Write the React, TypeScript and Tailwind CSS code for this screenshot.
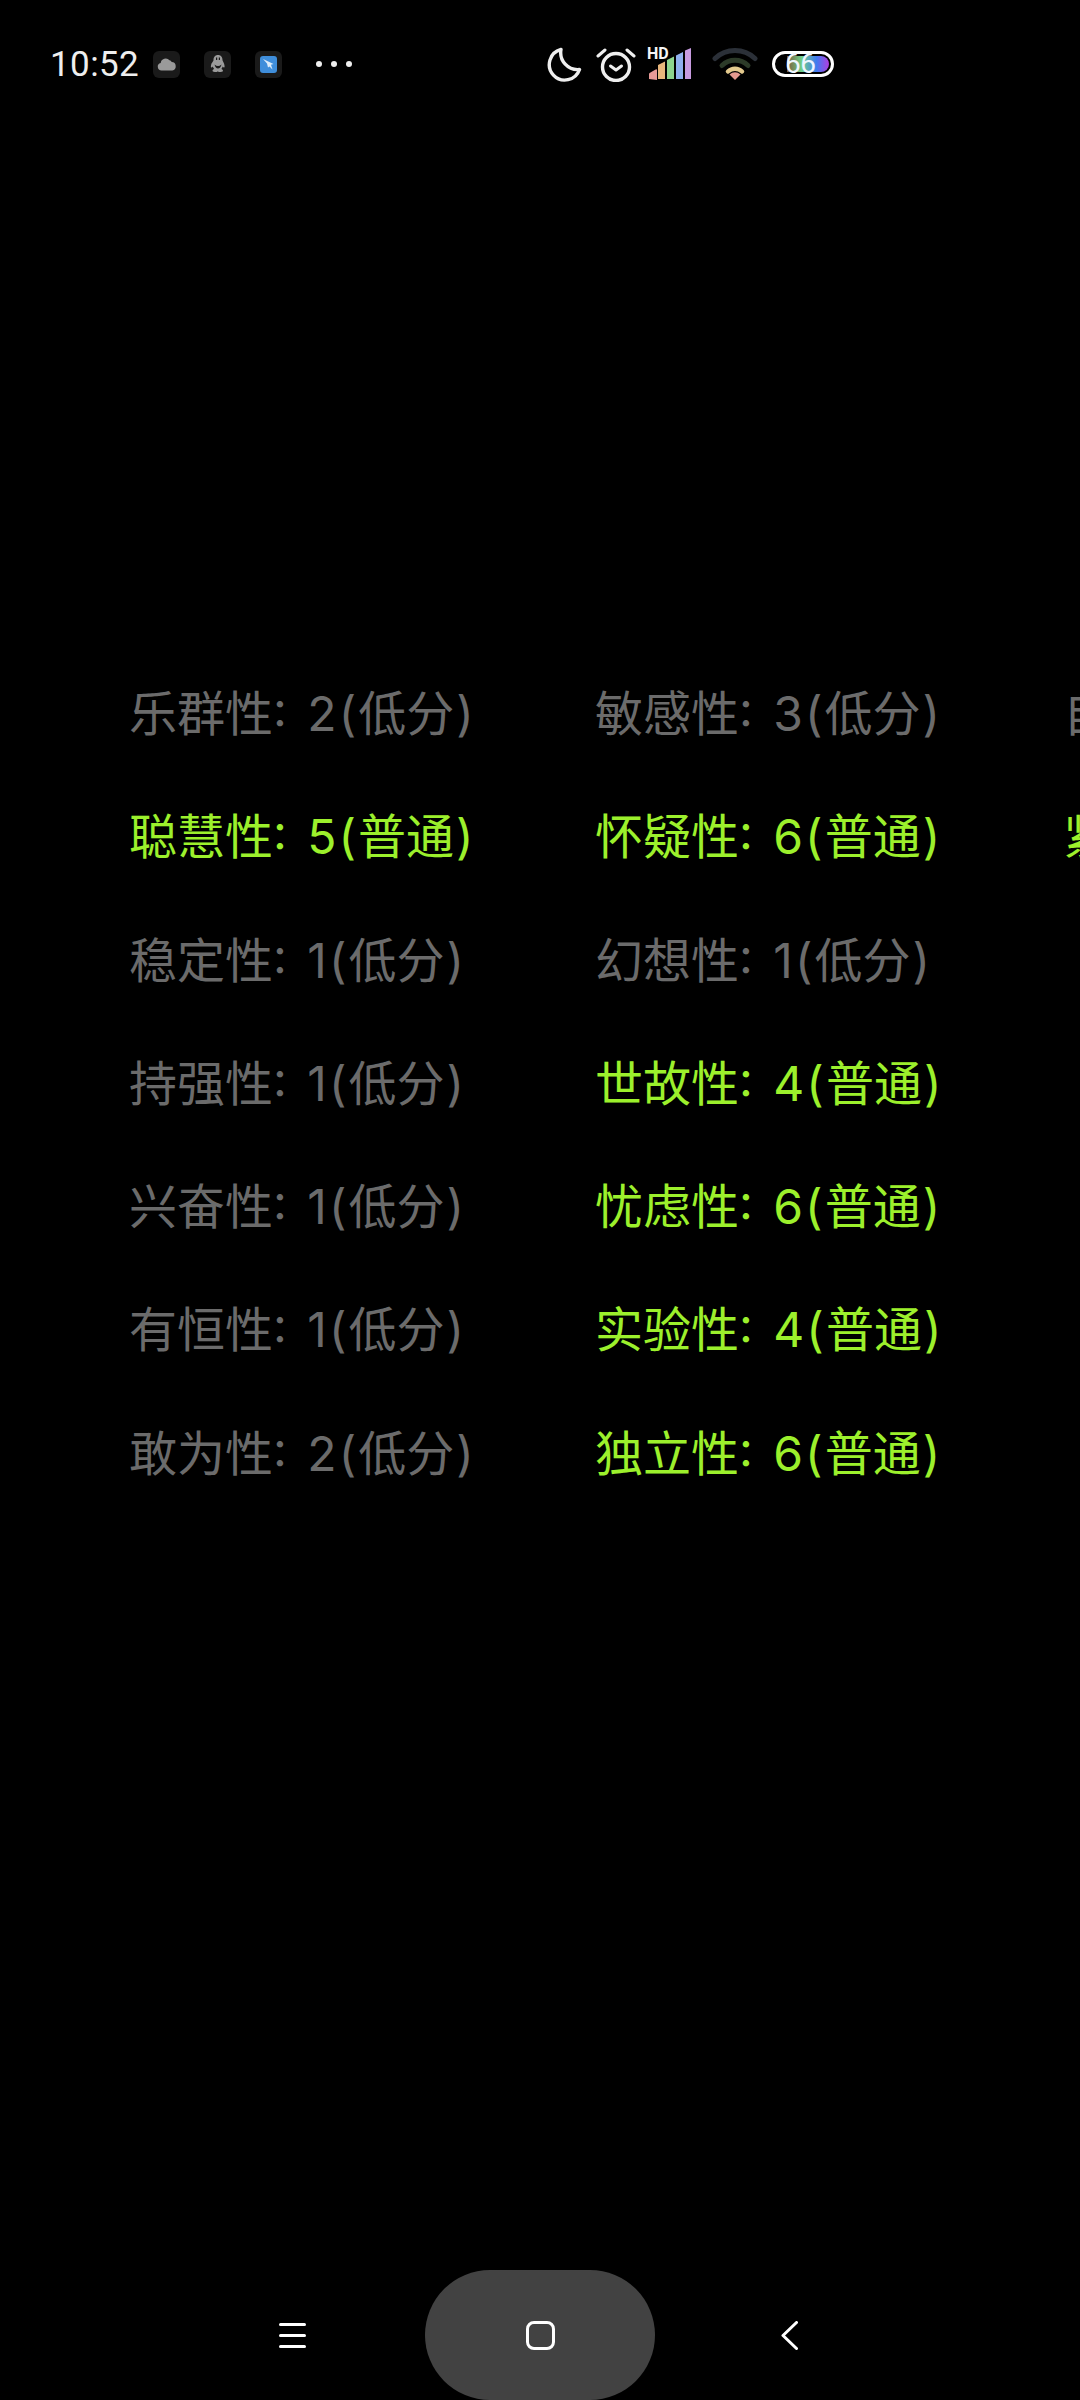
import React from "react";

type Item = { label: string; score: number; level: string };

const col1: Item[] = [
  { label: "乐群性", score: 2, level: "低分" },
  { label: "聪慧性", score: 5, level: "普通" },
  { label: "稳定性", score: 1, level: "低分" },
  { label: "持强性", score: 1, level: "低分" },
  { label: "兴奋性", score: 1, level: "低分" },
  { label: "有恒性", score: 1, level: "低分" },
  { label: "敢为性", score: 2, level: "低分" },
];

const col2: Item[] = [
  { label: "敏感性", score: 3, level: "低分" },
  { label: "怀疑性", score: 6, level: "普通" },
  { label: "幻想性", score: 1, level: "低分" },
  { label: "世故性", score: 4, level: "普通" },
  { label: "忧虑性", score: 6, level: "普通" },
  { label: "实验性", score: 4, level: "普通" },
  { label: "独立性", score: 6, level: "普通" },
];

const col3: Item[] = [
  { label: "自律性", score: 3, level: "低分" },
  { label: "紧张性", score: 5, level: "普通" },
];

const Row = ({ item }: { item: Item }) => (
  <p className={`h-[123.3px] leading-[123.3px] whitespace-nowrap text-[48px] [word-spacing:7px] font-['Inter','Noto_Sans_CJK_SC',sans-serif] ${item.level === "普通" ? "text-[#9cf02c]" : "text-[#6b6b6b]"}`}>
    {item.label}: {item.score}<span className="mx-[2px]">(</span>{item.level}<span className="ml-[2px]">)</span>
  </p>
);

const Column = ({ items, width }: { items: Item[]; width: string }) => (
  <div className={`flex flex-col shrink-0 ${width}`}>
    {items.map((it) => <Row key={it.label} item={it} />)}
  </div>
);

const IconBox = ({ children }: { children: React.ReactNode }) => (
  <div className="w-[27px] h-[27px] rounded-md bg-[#1a1a1a] flex items-center justify-center">{children}</div>
);

const StatusBar = () => (
  <div className="flex items-center h-[50px] mt-[39px] pl-[50px]">
    <span className="text-[35px] leading-none tracking-[0.4px] text-[#eeeeee] w-[103px] font-['Roboto',sans-serif]">10:52</span>
    <div className="flex gap-[24px]">
      <IconBox>
        <svg width="20" height="14" viewBox="0 0 20 14"><path d="M4.500 13.500a3.800 3.800 0 0 1-.8-7.500A5 5 0 0 1 12.500 3.300a3.200 3.200 0 0 1 2.200 1.700 4.300 4.300 0 0 1 .6 8.500z" fill="#9a9a9a" /></svg>
      </IconBox>
      <IconBox>
        <svg width="18" height="20" viewBox="0 0 18 20" fill="#9a9a9a">
          <path d="M9 1c3 0 4.500 2.300 4.500 5 0 1 1 1.800 1.500 3.500.5 1.700 1 3.500.2 4-.5.200-1-.3-1.500-1-.2 1-.7 1.800-1.400 2.400 1 .4 1.700 1 1.700 1.800 0 1-2 1.300-3.500 1.300-1 0-1.500-.3-1.500-.8-.5.500-1 .8-2 .8-1.500 0-3.500-.3-3.500-1.300 0-.8.700-1.400 1.700-1.800-.7-.6-1.200-1.400-1.400-2.400-.5.700-1 1.200-1.500 1-.8-.5-.3-2.300.2-4C3.500 7.800 4.500 7 4.500 6 4.500 3.300 6 1 9 1z" />
          <path d="M5.500 10.500q3.500 3 7 0-1 4-3.500 4t-3.500-4z" fill="#1a1a1a" />
          <rect x="7" y="3.500" width="1.200" height="2.500" fill="#1a1a1a" />
          <rect x="9.800" y="3.500" width="1.200" height="2.500" fill="#1a1a1a" />
        </svg>
      </IconBox>
      <IconBox>
        <div className="w-[17px] h-[17px] rounded-[3px] bg-[#3f8edb] flex items-center justify-center">
          <svg width="13" height="13" viewBox="0 0 13 13"><path d="M1 1l10.500 5-2.500.8 1.500 4.700-3-3-1.500 1-1-4z" fill="#dcecfa" /></svg>
        </div>
      </IconBox>
    </div>
    <div className="flex gap-[9px] ml-[34px]">
      <span className="w-[6px] h-[6px] rounded-full bg-[#eeeeee]" />
      <span className="w-[6px] h-[6px] rounded-full bg-[#eeeeee]" />
      <span className="w-[6px] h-[6px] rounded-full bg-[#eeeeee]" />
    </div>

    <div className="flex items-center ml-[194px]">
      <svg width="36" height="35" viewBox="0 0 36 35" fill="none">
        <path d="M15 2.500A15.500 15.500 0 1 0 33.500 22.500 A17 17 0 0 1 15 2.500z" stroke="#eeeeee" strokeWidth="3.400" strokeLinejoin="round" />
      </svg>
      <svg className="ml-[14px]" width="40" height="36" viewBox="0 0 40 36" fill="none" stroke="#eeeeee" strokeLinecap="round">
        <circle cx="20" cy="21" r="13.500" strokeWidth="3.400" />
        <path d="M14.500 20l5.500 4 5.500-4" strokeWidth="3" strokeLinejoin="round" />
        <path d="M2 10l7-6M38 10l-7-6" strokeWidth="3" />
      </svg>
      <div className="relative ml-[12px] w-[44px] h-[32px]">
        <svg width="44" height="32" viewBox="0 0 44 32">
          <path d="M1 31v-5q0-.6.600-1l6-3.500q1.400-.6 1.400.6v9.900z" fill="#e79a97" />
          <path d="M10 31V17l7-3.500V31z" fill="#e8b77c" />
          <path d="M19 31V12l7-3.500V31z" fill="#8dd58e" />
          <path d="M28 31V7.500l7-3.500V31z" fill="#8fb0ee" />
          <path d="M37 31V2.500l6-2.500V31z" fill="#c79be0" />
        </svg>
        <span className="absolute left-[-1px] top-[-3px] text-[16px] leading-[18px] font-bold text-[#f5f5f5] font-['Roboto',sans-serif]">HD</span>
      </div>
      <svg className="ml-[20px]" width="46" height="34" viewBox="0 0 46 34" fill="none" strokeLinecap="round">
        <path d="M3 11.500a29 29 0 0 1 40 0" stroke="#2b3038" strokeWidth="5" />
        <path d="M10 18.500a19 19 0 0 1 26 0" stroke="#2c3a28" strokeWidth="5" />
        <path d="M16 24.500a10 10 0 0 1 14 0" stroke="#e3ca8e" strokeWidth="4.500" />
        <path d="M23 33l-5.500-5.500a8 8 0 0 1 11 0z" fill="#e49a90" />
      </svg>
      <div className="relative ml-[14px] w-[62px] h-[26px] rounded-full border-[3px] border-white p-[2px] flex justify-end">
        <div className="w-[42px] h-full rounded-r-full bg-[linear-gradient(90deg,#7a5a3c,#6fd08a_35%,#3f7bf0_70%,#b03ee0)]" />
        <span className="absolute left-[10px] top-0 text-[28px] leading-[20px] tracking-[-0.5px] text-[#eef6ff] font-['Roboto',sans-serif]">66</span>
      </div>
    </div>
  </div>
);

const NavBar = () => (
  <div className="flex items-center h-[130px]">
    <div className="ml-[279px] flex flex-col gap-[8px]">
      <span className="w-[27px] h-[3px] rounded-full bg-white" />
      <span className="w-[27px] h-[3px] rounded-full bg-white" />
      <span className="w-[27px] h-[3px] rounded-full bg-white" />
    </div>
    <div className="ml-[119px] w-[230px] h-[130px] rounded-full bg-[#424242] flex items-center justify-center">
      <div className="w-[29px] h-[29px] rounded-[8px] border-[3px] border-white" />
    </div>
    <svg className="ml-[126px]" width="17" height="29" viewBox="0 0 17 29" fill="none" stroke="white" strokeWidth="3" strokeLinecap="round" strokeLinejoin="round">
      <path d="M15.500 1.500L2 14.500l13.500 13" />
    </svg>
  </div>
);

export default function App() {
  return (
    <div className="w-[1080px] h-[2400px] bg-black overflow-hidden flex flex-col">
      <StatusBar />
      <div className="flex pl-[129px] mt-[563px]">
        <Column items={col1} width="w-[466px]" />
        <Column items={col2} width="w-[468px]" />
        <Column items={col3} width="w-[468px]" />
      </div>
      <div className="mt-auto">
        <NavBar />
      </div>
    </div>
  );
}
